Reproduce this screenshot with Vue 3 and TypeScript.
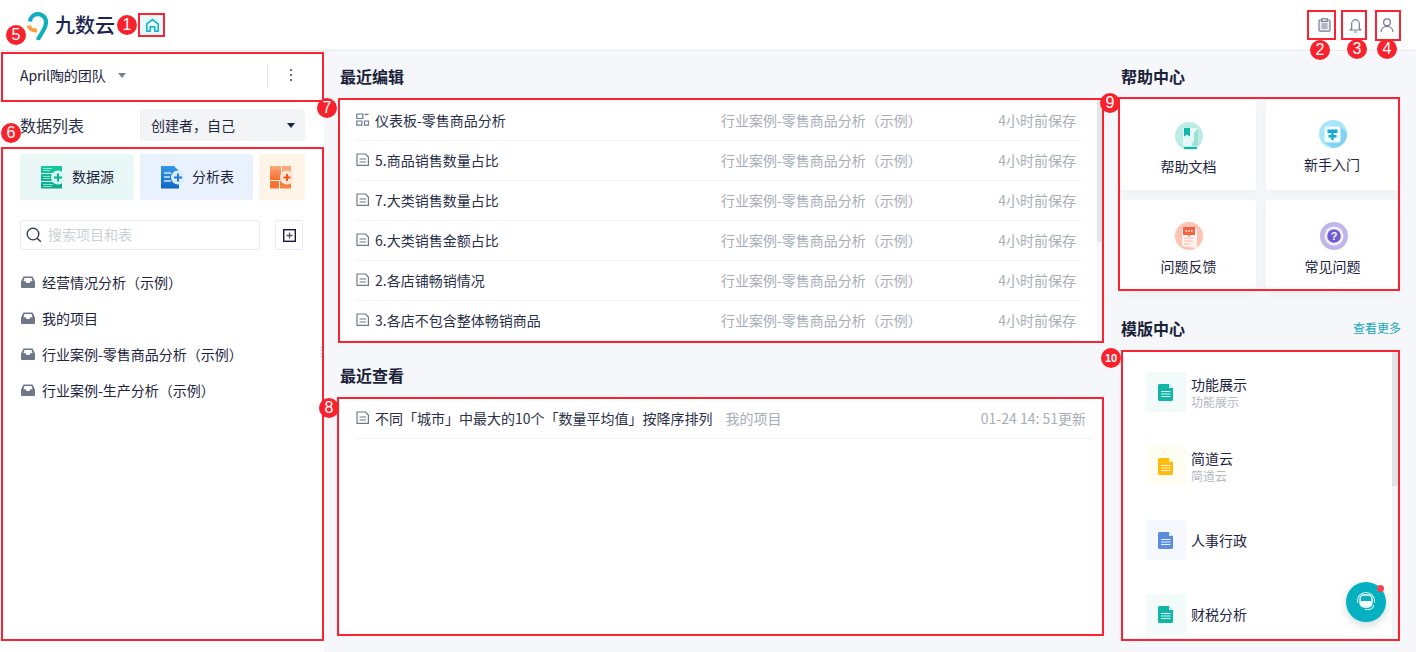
<script setup lang="ts">
const edits: { name: string; kind: 'dash' | 'doc' }[] = [
  { name: '仪表板-零售商品分析', kind: 'dash' },
  { name: '5.商品销售数量占比', kind: 'doc' },
  { name: '7.大类销售数量占比', kind: 'doc' },
  { name: '6.大类销售金额占比', kind: 'doc' },
  { name: '2.各店铺畅销情况', kind: 'doc' },
  { name: '3.各店不包含整体畅销商品', kind: 'doc' },
]
const projects: string[] = ['经营情况分析（示例）', '我的项目', '行业案例-零售商品分析（示例）', '行业案例-生产分析（示例）']
const templates: { name: string; sub: string; bg: string; fg: string }[] = [
  { name: '功能展示', sub: '功能展示', bg: '#f2fbfa', fg: '#10b5a8' },
  { name: '简道云', sub: '简道云', bg: '#fffcf2', fg: '#fdbb0c' },
  { name: '人事行政', sub: '', bg: '#f5f9ff', fg: '#5b8dde' },
  { name: '财税分析', sub: '', bg: '#f2fbfa', fg: '#10b5a8' },
]
const boxes: { l: number; t: number; w: number; h: number }[] = [
  { l: 138, t: 13, w: 27, h: 24 },
  { l: 1307, t: 10, w: 29, h: 30 },
  { l: 1341, t: 10, w: 26, h: 30 },
  { l: 1375, t: 10, w: 26, h: 31 },
  { l: 1, t: 52, w: 323, h: 50 },
  { l: 1, t: 147, w: 323, h: 494 },
  { l: 338, t: 98, w: 766, h: 245 },
  { l: 337, t: 397, w: 767, h: 239 },
  { l: 1118, t: 97, w: 282, h: 194 },
  { l: 1121, t: 350, w: 279, h: 291 },
]
const badges: { n: number; x: number; y: number }[] = [
  { n: 1, x: 127, y: 25 },
  { n: 2, x: 1320, y: 50 },
  { n: 3, x: 1357, y: 49 },
  { n: 4, x: 1387, y: 49 },
  { n: 5, x: 16, y: 35 },
  { n: 6, x: 11, y: 133 },
  { n: 7, x: 327, y: 108 },
  { n: 8, x: 329, y: 408 },
  { n: 9, x: 1110, y: 103 },
  { n: 10, x: 1111, y: 358 },
]
</script>

<template>
  <div class="page">
    <header class="top">
      <div class="brand">
        <svg class="logo" width="24" height="28" viewBox="0 0 24 28" fill="none">
          <path d="M4 9.500A8 8 0 0 1 11 2.200" stroke="#14a6d0" stroke-width="4.200"/>
          <path d="M11 2.200A8 8 0 0 1 20 9.500c.3 3.300-1.300 6.500-3 9.500l-4.500 7.500" stroke="#0fb1b8" stroke-width="4.200" stroke-linecap="round"/>
          <path d="M2.600 13.500c1 3.200 4 5.200 8.400 4.900" stroke="#f7a13c" stroke-width="4"/>
        </svg>
        <span class="wordmark">九数云</span>
        <span class="home">
          <svg width="15" height="15" viewBox="0 0 15 15" fill="none" stroke="#0fb0c0" stroke-width="1.500">
            <path d="M1.800 13.200V5.800L7.500 1.600l5.700 4.200v7.400H9.800V8.800H5.200v4.400z" stroke-linejoin="round"/>
          </svg>
        </span>
      </div>
      <div class="tools">
        <svg width="13" height="14" viewBox="0 0 13 14" fill="none" stroke="#747c90" stroke-width="1.200">
          <rect x="1" y="2" width="11" height="11.200" rx="1" fill="#eceef2"/><rect x="3.800" y=".8" width="5.400" height="2.600" fill="#fff"/>
          <path d="M3.500 6h6M3.500 8h6M3.500 10h6"/>
        </svg>
        <svg width="13" height="15" viewBox="0 0 13 15" fill="none" stroke="#747c90" stroke-width="1.200">
          <path d="M2.700 10.500V5.500a3.800 3.800 0 0 1 7.600 0v5l1.400 1.500H1.300zM5 14h3"/>
        </svg>
        <svg width="14" height="15" viewBox="0 0 14 15" fill="none" stroke="#747c90" stroke-width="1.200">
          <circle cx="7" cy="4.300" r="3.400"/><path d="M1 14c.2-3.400 2.800-5.600 6-5.600s5.800 2.200 6 5.600"/>
        </svg>
      </div>
    </header>

    <div class="body">
      <aside class="side">
        <div class="team">
          <span class="team-name">April陶的团队</span>
          <i class="caret grey"></i>
          <span class="vline"></span>
          <span class="dots"><b></b><b></b><b></b></span>
        </div>
        <div class="data-head">
          <span class="data-title">数据列表</span>
          <div class="select"><span>创建者，自己</span><i class="caret dark"></i></div>
        </div>
        <div class="create">
          <div class="create-btn teal">
            <svg width="24" height="24" viewBox="0 0 24 24">
              <defs>
                <linearGradient id="gt" x1="0" y1="0" x2="0" y2="1"><stop offset="0" stop-color="#16c7a0"/><stop offset="1" stop-color="#0ca888"/></linearGradient>
                <linearGradient id="gb" x1="0" y1="0" x2="0" y2="1"><stop offset="0" stop-color="#3398e6"/><stop offset="1" stop-color="#0f67c4"/></linearGradient>
                <linearGradient id="go" x1="0" y1="0" x2="0" y2="1"><stop offset="0" stop-color="#fdab7c"/><stop offset="1" stop-color="#f66a26"/></linearGradient>
              </defs>
              <path d="M1 1h21v7H1zM1 9h21v7H1zM1 17h21v6.500H1z" fill="url(#gt)"/>
              <path d="M3 3.500h9M3 5.500h7M3 11.500h7M3 13.500h7M3 19.500h10M3 21.500h9" stroke="#a5eedd" stroke-width=".8"/>
              <circle cx="18" cy="12.500" r="7" fill="#d6f6f1"/>
              <path d="M18 8.500v8M14 12.500h8" stroke="#0fae90" stroke-width="2"/>
            </svg>
            <span>数据源</span>
          </div>
          <div class="create-btn blue">
            <svg width="24" height="24" viewBox="0 0 24 24">
              <path d="M1 1h13l5 5v17.500H1z" fill="url(#gb)"/>
              <path d="M4 8h7M4 12h6M4 16h7" stroke="#d3e8fb" stroke-width="1.400"/>
              <circle cx="18" cy="12.500" r="7" fill="#d9ebfc"/>
              <path d="M18 8.500v8M14 12.500h8" stroke="#1f7ad2" stroke-width="2"/>
            </svg>
            <span>分析表</span>
          </div>
          <div class="create-btn orange">
            <svg width="24" height="24" viewBox="0 0 24 24">
              <path d="M1 1h11v14H1z" fill="url(#go)"/><path d="M13 1h9v8h-9z" fill="#fca777"/>
              <path d="M1 16h9v7.500H1z" fill="#f6742f"/><path d="M11 16h11v7.500H11z" fill="#f7823f"/>
              <circle cx="18" cy="12.500" r="7" fill="#ffe6d6"/>
              <path d="M18 9v7M14.500 12.500h7" stroke="#f4561a" stroke-width="2"/>
            </svg>
          </div>
        </div>
        <div class="search-row">
          <div class="search">
            <svg width="16" height="16" viewBox="0 0 16 16" fill="none" stroke="#2a3350" stroke-width="1.300">
              <circle cx="7" cy="7" r="5.800"/><path d="M11.200 11.200l3.600 3.600"/>
            </svg>
            <span>搜索项目和表</span>
          </div>
          <div class="add">
            <svg width="13" height="13" viewBox="0 0 13 13" fill="none">
              <rect x=".7" y=".7" width="11.600" height="11.600" stroke="#141b3a" stroke-width="1.400"/>
              <path d="M6.500 3.500v6M3.500 6.500h6" stroke="#4d5363" stroke-width="1.300"/>
            </svg>
          </div>
        </div>
        <ul class="tree">
          <li v-for="p in projects" :key="p">
            <svg width="14" height="12" viewBox="0 0 14 12">
              <path d="M2.500.5h9L14 5.500V11a1 1 0 0 1-1 1H1a1 1 0 0 1-1-1V5.500z" fill="#6f7789"/>
              <path d="M3.500 2h7l1 3.300H9.200L8.500 7h-3l-.7-1.700H2.500z" fill="#fff"/>
            </svg>
            <span>{{ p }}</span>
          </li>
        </ul>
        <span class="handle"></span>
      </aside>

      <main class="center">
        <h2 class="head">最近编辑</h2>
        <section class="panel edited">
          <div v-for="e in edits" :key="e.name" class="row">
            <svg v-if="e.kind === 'dash'" class="ico" width="13" height="13" viewBox="0 0 13 13" fill="none" stroke="#6f7789" stroke-width="1.200">
              <path d="M.8 1h6v4.500h-6zM8.500 1.400h4M.8 8h5v4.200h-5zM8.500 8h4v4.200h-4z"/>
            </svg>
            <svg v-else class="ico" width="13" height="13" viewBox="0 0 13 13" fill="none" stroke="#6f7789" stroke-width="1.200">
              <path d="M1 1h8.500L12.400 4v8.300H1zM3.500 6h6.500M3.500 9h6.500"/>
            </svg>
            <span class="name">{{ e.name }}</span>
            <span class="proj">行业案例-零售商品分析（示例）</span>
            <span class="time">4小时前保存</span>
          </div>
          <span class="scroll"></span>
        </section>

        <h2 class="head second">最近查看</h2>
        <section class="panel viewed">
          <div class="row">
            <svg class="ico" width="13" height="13" viewBox="0 0 13 13" fill="none" stroke="#6f7789" stroke-width="1.200">
              <path d="M1 1h8.500L12.400 4v8.300H1zM3.500 6h6.500M3.500 9h6.500"/>
            </svg>
            <span class="name">不同「城市」中最大的10个「数量平均值」按降序排列</span>
            <span class="mine">我的项目</span>
            <span class="time">01-24 14: 51更新</span>
          </div>
        </section>
      </main>

      <aside class="right">
        <h2 class="head">帮助中心</h2>
        <section class="help">
          <div class="card c1">
            <svg width="28" height="28" viewBox="0 0 28 28">
              <circle cx="14" cy="14" r="14" fill="#bdece6"/>
              <path d="M23 6v18h-5L8 8V6z" fill="#9ce0d8"/>
              <path d="M8 6h15L8 24z" fill="#eef9f8"/><path d="M8 6h11v12l-3 6H8z" fill="#e4f7f5"/>
              <path d="M9 6h6v8.500l-3-2-3 2z" fill="#0fb8a6"/><path d="M9 25h13v2H9z" fill="#0fb8a6"/>
            </svg>
            <span>帮助文档</span>
          </div>
          <div class="card c2">
            <svg width="28" height="28" viewBox="0 0 28 28">
              <circle cx="14" cy="14" r="14" fill="#a6e6f8"/>
              <path d="M22 7l6 6a14 14 0 0 1-14 15l-9-6z" fill="#7fd3f2"/>
              <rect x="5.500" y="6.500" width="16" height="16" rx="2" fill="#f2fcff"/>
              <path d="M8.500 9.500h10V13h-10zM9.500 15h8v2.500h-8zM12.300 13h2.400v7h-2.400z" fill="#12a9d8"/>
            </svg>
            <span>新手入门</span>
          </div>
          <div class="card c3">
            <svg width="28" height="28" viewBox="0 0 28 28">
              <circle cx="14" cy="14" r="14" fill="#ffc3b5"/>
              <path d="M7 7h15v19l-15-2z" fill="#fff3ef"/>
              <path d="M8 5h12v8h-5l-1 2-1-2H8z" fill="#f0643f"/>
              <path d="M10.500 9h1.500M13.200 9h1.500M16 9h1.500" stroke="#fff" stroke-width="1.500"/>
              <path d="M9 16h9M9 19h9M9 22h6" stroke="#ffb7a5"/>
            </svg>
            <span>问题反馈</span>
          </div>
          <div class="card c4">
            <svg width="28" height="28" viewBox="0 0 28 28">
              <circle cx="14" cy="14" r="14" fill="#c0b6ec"/>
              <circle cx="14" cy="14" r="9.500" fill="#f4f2fd"/>
              <circle cx="14" cy="14" r="6.800" fill="#6f5bcf"/>
              <text x="14" y="17.500" text-anchor="middle" class="q">?</text>
            </svg>
            <span>常见问题</span>
          </div>
        </section>
        <div class="tpl-head">
          <h2 class="head">模版中心</h2>
          <span class="more">查看更多</span>
        </div>
        <section class="tpl">
          <div v-for="t in templates" :key="t.name" class="tpl-item">
            <div class="tpl-ico" :style="{ background: t.bg }">
              <svg width="16" height="17" viewBox="0 0 16 17">
                <path d="M1.500 0H11l4 4v11.500a1.500 1.500 0 0 1-1.500 1.500h-12A1.500 1.500 0 0 1 0 15.500v-14A1.500 1.500 0 0 1 1.500 0z" :fill="t.fg"/>
                <path d="M11 0l4 4h-4z" fill="#fff" opacity=".8"/>
                <path d="M3 7.500h9.500M3 10h9.500M3 12.500h9.500" stroke="#fff" stroke-width="1" opacity=".85"/>
              </svg>
            </div>
            <div class="tpl-text">
              <span class="tpl-name">{{ t.name }}</span>
              <span v-if="t.sub" class="tpl-sub">{{ t.sub }}</span>
            </div>
          </div>
          <span class="tpl-thumb"></span>
        </section>
      </aside>
    </div>

    <div class="fab">
      <svg width="22" height="22" viewBox="0 0 22 22" fill="none">
        <rect x="5" y="4" width="12" height="12" rx="4" stroke="#fff" stroke-width="1.300"/>
        <path d="M5.500 10h11v2.500a3 3 0 0 1-3 3h-5a3 3 0 0 1-3-3z" fill="#fff"/>
        <path d="M2.500 11.500V9.500a8.500 8 0 0 1 17 0v2" stroke="#dff8fa" stroke-width="1.200"/>
        <path d="M18.500 14c0 3-2.500 4.500-5 4.500H10" stroke="#dff8fa" stroke-width="1.200"/>
      </svg>
      <i></i>
    </div>

    <span v-for="(b, i) in boxes" :key="i" class="mark" :style="{ left: b.l + 'px', top: b.t + 'px', width: b.w + 'px', height: b.h + 'px' }"></span>
    <span v-for="b in badges" :key="b.n" class="badge" :class="{ small: b.n === 10 }" :style="{ left: b.x - 10 + 'px', top: b.y - 10 + 'px' }">{{ b.n }}</span>
  </div>
</template>

<style>
html, body { margin: 0; background: #fff; }
</style>

<style scoped>
.page {
  position: relative;
  width: 1416px;
  height: 652px;
  overflow: hidden;
  background: #f5f7fa;
  color: #1c2440;
  font-family: "Noto Sans CJK SC", "Liberation Sans", sans-serif;
  font-size: 14px;
}
.top {
  height: 50px;
  background: #fff;
  border-bottom: 1px solid #e6e9ed;
  display: flex;
  align-items: center;
  justify-content: space-between;
}
.brand { display: flex; align-items: center; margin-left: 26px; }
.logo { margin-top: 1px; }
.wordmark {
  margin-left: 5px;
  font-size: 20px;
  font-weight: 500;
  color: #1b2550;
  line-height: 28px;
}
.home {
  margin-left: 26px;
  width: 23px;
  height: 22px;
  background: #e5f8fa;
  display: flex;
  align-items: center;
  justify-content: center;
}
.tools { display: flex; align-items: center; gap: 18px; margin-right: 22px; }
.body { display: flex; height: 601px; }
.side {
  position: relative;
  width: 324px;
  flex: none;
  background: #fff;
}
.team {
  height: 50px;
  display: flex;
  align-items: center;
  padding-left: 20px;
}
.team-name { font-size: 14px; line-height: 20px; margin-top: -2px; width: 86px; white-space: nowrap; letter-spacing: -.1px; }
.caret { display: block; width: 0; height: 0; border-left: 4px solid transparent; border-right: 4px solid transparent; }
.caret.grey { border-top: 5px solid #7a8296; margin-left: 12px; margin-top: -2px; }
.caret.dark { border-top: 5px solid #1c2440; }
.vline { width: 1px; height: 23px; background: #e3e5e9; margin-left: 141px; margin-top: -2px; }
.dots { display: flex; flex-direction: column; gap: 3px; margin-left: 22px; margin-top: -2px; }
.dots b { display: block; width: 2px; height: 2px; background: #69708a; }
.data-head {
  height: 32px;
  display: flex;
  align-items: center;
  justify-content: space-between;
  padding: 0 19px 0 20px;
  box-sizing: border-box;
  margin-top: 8px;
}
.data-title { font-size: 16px; line-height: 22px; color: #2a3048; }
.select {
  width: 165px;
  height: 32px;
  background: #f3f4f6;
  border-radius: 2px;
  display: flex;
  align-items: center;
  justify-content: space-between;
  padding: 0 10px 0 11px;
  box-sizing: border-box;
}
.create { display: flex; gap: 6px; padding-left: 20px; margin-top: 13px; height: 46px; }
.create-btn {
  height: 46px;
  display: flex;
  align-items: center;
  gap: 8px;
  border-radius: 2px;
  box-sizing: border-box;
}
.create-btn span { margin-top: -2px; }
.create-btn.teal { width: 114px; background: #e9f8f6; padding-left: 20px; }
.create-btn.blue { width: 113px; background: #e8f1fc; padding-left: 20px; }
.create-btn.orange { width: 46px; background: #fff4e8; padding-left: 10px; border-radius: 2px 0 0 2px; }
.search-row { display: flex; margin: 20px 0 0 20px; gap: 15px; }
.search {
  width: 240px;
  height: 30px;
  box-sizing: border-box;
  border: 1px solid #e8eaee;
  border-radius: 2px;
  display: flex;
  align-items: center;
  padding-left: 5px;
  gap: 6px;
  color: #cdd0d8;
}
.search span { margin-top: -2px; }
.add {
  width: 28px;
  height: 30px;
  box-sizing: border-box;
  border: 1px solid #e8eaee;
  border-radius: 2px;
  display: flex;
  align-items: center;
  justify-content: center;
}
.tree { list-style: none; margin: 14px 0 0; padding: 0 0 0 21px; }
.tree li { height: 36px; display: flex; align-items: center; gap: 7px; }
.handle {
  position: absolute;
  right: 0;
  top: 296px;
  width: 4px;
  height: 10px;
  background: repeating-linear-gradient(#d3d5dc 0 1px, transparent 1px 3px);
}
.center { width: 762px; margin-left: 16px; flex: none; }
.head {
  margin: 0;
  font-size: 16px;
  font-weight: 700;
  line-height: 22px;
  color: #1a2138;
}
.center > .head { padding-top: 14px; height: 35px; }
.center > .head.second { padding-top: 23px; height: 33px; }
.panel { position: relative; background: #fff; overflow: hidden; }
.edited { height: 241px; padding: 1px 21px 0 15px; box-sizing: border-box; }
.viewed { height: 236px; padding: 2px 10px 0 15px; box-sizing: border-box; }
.row {
  height: 40px;
  box-sizing: border-box;
  border-bottom: 1px solid #f0f2f5;
  display: flex;
  align-items: center;
  padding: 0 0 2px 1px;
}
.ico { flex: none; margin-right: 6px; }
.name { line-height: 20px; color: #2a3048; white-space: nowrap; }
.edited .name { width: 346px; }
.proj { width: 255px; color: #a8adb8; white-space: nowrap; }
.time { margin-left: auto; padding-right: 5px; color: #a8adb8; white-space: nowrap; }
.viewed .time { padding-right: 6px; }
.mine { margin-left: 13px; color: #a8adb8; }
.scroll {
  position: absolute;
  right: 0;
  top: 0;
  bottom: 0;
  width: 5px;
  background: linear-gradient(#e3e5e9 142px, #f6f7f9 142px);
}
.right { width: 278px; margin-left: 18px; flex: none; }
.right > .head { padding: 14px 0 0 1px; height: 35px; }
.help {
  display: grid;
  grid-template-columns: 136px 132px;
  grid-auto-rows: 90px;
  gap: 10px;
}
.card {
  position: relative;
  background: #fff;
  box-shadow: 0 4px 10px rgba(40, 50, 90, .03);
}
.card svg, .card span { position: absolute; }
.card span { left: 0; right: 0; text-align: center; line-height: 20px; }
.c1 svg { left: 55px; top: 22px; }
.c1 span { top: 56px; left: 1px; }
.c2 svg { left: 53px; top: 20px; }
.c2 span { top: 54px; }
.c3 svg { left: 55px; top: 22px; }
.c3 span { top: 56px; left: 1px; }
.c4 svg { left: 54px; top: 22px; }
.c4 span { top: 56px; left: 1px; }
.q { fill: #fff; font-size: 11px; font-weight: 700; font-family: "Liberation Sans", sans-serif; }
.tpl-head {
  display: flex;
  align-items: center;
  justify-content: space-between;
  height: 62px;
  padding-top: 14px;
  box-sizing: border-box;
  padding-left: 1px;
  margin-right: -3px;
}
.more { font-size: 12px; color: #12a9b8; line-height: 16px; margin-top: -1px; }
.tpl {
  position: relative;
  margin-left: 3px;
  height: 286px;
  background: #fff;
  overflow: hidden;
  padding: 20px 0 0 23px;
  box-sizing: border-box;
}
.tpl-item { display: flex; align-items: center; height: 40px; margin-bottom: 34px; gap: 5px; }
.tpl-ico { width: 40px; height: 40px; display: flex; align-items: center; justify-content: center; flex: none; }
.tpl-text { display: flex; flex-direction: column; }
.tpl-name { line-height: 18px; color: #1c2440; }
.tpl-sub { font-size: 12px; line-height: 16px; color: #b4b8c2; margin-top: 1px; }
.tpl-thumb {
  position: absolute;
  right: 0;
  top: 0;
  bottom: 0;
  width: 6px;
  border-radius: 0 0 3px 3px;
  background: linear-gradient(#e2e4e8 134px, #f4f5f7 134px);
}
.fab {
  position: absolute;
  left: 1346px;
  top: 582px;
  width: 40px;
  height: 40px;
  border-radius: 50%;
  background: #05b0c1;
  box-shadow: 0 3px 10px rgba(0, 60, 80, .2);
  display: flex;
  align-items: center;
  justify-content: center;
}
.fab i {
  position: absolute;
  right: 2px;
  top: 3px;
  width: 7px;
  height: 7px;
  border-radius: 50%;
  background: #f8444f;
}
.mark {
  position: absolute;
  box-sizing: border-box;
  border: 2px solid #fb2331;
  pointer-events: none;
}
.badge {
  position: absolute;
  width: 20px;
  height: 20px;
  border-radius: 50%;
  background: #f8222c;
  color: #fff;
  font-family: "Liberation Sans", sans-serif;
  font-size: 16px;
  line-height: 20px;
  text-align: center;
}
.badge.small { font-size: 11px; font-weight: 700; }
</style>
